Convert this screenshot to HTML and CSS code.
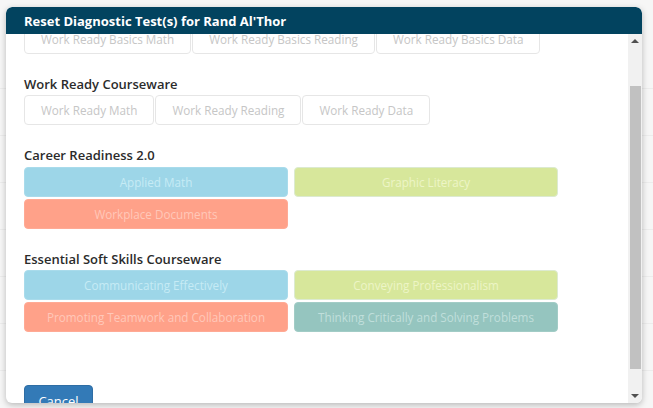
FILE: index.html
```html
<!DOCTYPE html>
<html>
<head>
<meta charset="utf-8">
<link rel="stylesheet" href="styles.css">
</head>
<body>
<div class="backdrop">
  <div class="bg-row"></div><div class="bg-row"></div><div class="bg-row"></div><div class="bg-row"></div><div class="bg-row"></div><div class="bg-row"></div><div class="bg-row"></div><div class="bg-row"></div><div class="bg-row"></div>
</div>
<div class="modal">
  <div class="modal-header">Reset Diagnostic Test(s) for Rand Al'Thor</div>
  <div class="modal-body">
    <div class="viewport">
      <div class="content">
        <div class="btn-row">
          <button class="btn-plain">Work Ready Basics Math</button>
          <button class="btn-plain">Work Ready Basics Reading</button>
          <button class="btn-plain">Work Ready Basics Data</button>
        </div>
        <h4 class="section-title">Work Ready Courseware</h4>
        <div class="btn-row">
          <button class="btn-plain">Work Ready Math</button>
          <button class="btn-plain">Work Ready Reading</button>
          <button class="btn-plain">Work Ready Data</button>
        </div>
        <h4 class="section-title tight">Career Readiness 2.0</h4>
        <div class="btn-grid">
          <button class="btn-c blue">Applied Math</button>
          <button class="btn-c green">Graphic Literacy</button>
          <button class="btn-c salmon">Workplace Documents</button>
        </div>
        <h4 class="section-title">Essential Soft Skills Courseware</h4>
        <div class="btn-grid">
          <button class="btn-c blue">Communicating Effectively</button>
          <button class="btn-c green">Conveying Professionalism</button>
          <button class="btn-c salmon">Promoting Teamwork and Collaboration</button>
          <button class="btn-c teal">Thinking Critically and Solving Problems</button>
        </div>
        <div class="footer">
          <button class="btn-primary">Cancel</button>
        </div>
      </div>
    </div>
    <div class="scrollbar">
      <div class="arrow up"></div>
      <div class="track"><div class="thumb"></div></div>
      <div class="arrow down"></div>
    </div>
  </div>
</div>
</body>
</html>
```
FILE: styles.css
```css
html, body {
  margin: 0;
  padding: 0;
}
body {
  width: 653px;
  height: 408px;
  overflow: hidden;
  background: #f6f6f6;
  font-family: "Open Sans", "Noto Sans", sans-serif;
  position: relative;
}
.backdrop {
  display: flex;
  flex-direction: column;
  padding-top: 42px;
}
.bg-row {
  height: 46px;
  border-bottom: 1px solid #ececec;
}
.modal {
  position: absolute;
  left: 6px;
  top: 7px;
  width: 636px;
  height: 396px;
  background: #fff;
  border-radius: 6px;
  box-shadow: 0 2px 6px rgba(0,0,0,0.25);
  display: flex;
  flex-direction: column;
  overflow: hidden;
}
.modal-header {
  height: 27px;
  flex: none;
  background: #02435f;
  color: #fff;
  font-weight: 700;
  font-size: 13px;
  line-height: 29px;
  padding-left: 18px;
  box-sizing: border-box;
  border-radius: 6px 6px 0 0;
  position: relative;
  z-index: 2;
}
.modal-body {
  flex: 1;
  display: flex;
  min-height: 0;
}
.viewport {
  flex: 1;
  overflow: hidden;
}
.content {
  margin-top: -10px;
  padding: 0 18px;
}
.btn-row {
  display: flex;
  gap: 1px;
}
button {
  font-family: inherit;
  font-size: 11.7px;
  margin: 0;
  cursor: default;
}
.btn-plain {
  height: 30px;
  padding: 0 16px;
  background: #fff;
  border: 1px solid #e6e6e6;
  border-radius: 4px;
  color: #c6c6c6;
}
.section-title {
  margin: 22px 0 2px;
  font-size: 13px;
  font-weight: 600;
  line-height: 17px;
  color: #2b2b2b;
}
.section-title.tight {
  margin-bottom: 3px;
}
.btn-grid {
  display: grid;
  grid-template-columns: 264px 264px;
  column-gap: 6px;
  row-gap: 2px;
}
.btn-c {
  height: 30px;
  border: 1px solid transparent;
  border-radius: 4px;
  text-align: center;
  padding: 0;
}
.blue { background: #9dd6e8; color: #c6ebf5; border-color: #a9dbeb; }
.green { background: #d7e79b; color: #edf5c6; border-color: #dcead0; }
.salmon { background: #ffa189; color: #ffc8b9; border-color: #ffaa95; }
.teal { background: #95c5bf; color: #c0dfdb; border-color: #a2ccc6; }
.footer {
  margin-top: 53px;
}
.btn-primary {
  width: 69px;
  height: 32px;
  background: #337ab7;
  border: 1px solid #2e6da4;
  border-radius: 4px;
  color: #fff;
  font-size: 13px;
  padding: 0;
}
.scrollbar {
  width: 14px;
  flex: none;
  background: #f1f1f1;
  display: flex;
  flex-direction: column;
  align-items: center;
}
.arrow {
  height: 14px;
  width: 14px;
  flex: none;
  display: flex;
  align-items: center;
  justify-content: center;
}
.arrow::before {
  content: "";
  width: 0;
  height: 0;
  border-left: 4px solid transparent;
  border-right: 4px solid transparent;
}
.arrow.up::before { border-bottom: 4px solid #505050; }
.arrow.down::before { border-top: 4px solid #505050; }
.track {
  flex: 1;
  width: 100%;
  display: flex;
  flex-direction: column;
  align-items: center;
  padding-top: 38px;
  box-sizing: border-box;
}
.thumb {
  width: 11px;
  height: 283px;
  background: #c1c1c1;
}
```
